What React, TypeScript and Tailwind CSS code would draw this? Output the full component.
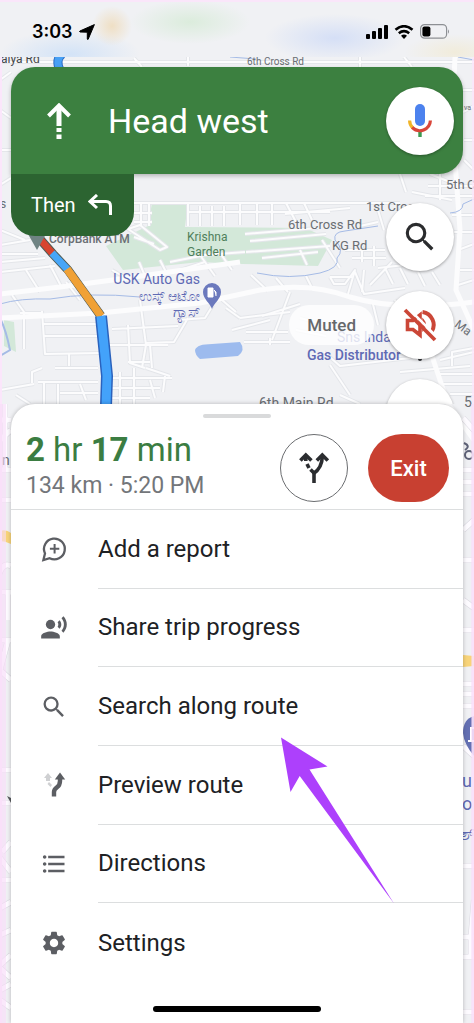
import type { ReactNode } from "react";
import { MdFormatListBulleted, MdRecordVoiceOver, MdSearch, MdSettings } from "react-icons/md";

const ROADS_WIDE = [
  "M0 294 L60 287 L120 279 L240 262",
  "M0 318 L100 313 L200 303 L260 290 Q310 282 350 297 Q400 312 474 302",
  "M455 57 L452 120 L460 230 L456 290 L474 330",
  "M430 350 L448 404 L474 440",
  "M405 57 L400 20",
];

const ROADS = [
  // below the status bar
  "M0 62 H474", "M188 57 V66", "M134 58 L142 67", "M360 57 V67", "M404 57 L412 67",
  "M463 90 H474", "M463 112 L474 106", "M464 140 H474", "M464 160 L474 170",
  "M0 80 L11 72", "M0 110 L11 118", "M0 150 H11", "M0 185 L11 178",
  // around the garden
  "M134 203 H400", "M134 213 H152 M134 222 H152 M141 203 V226 M149 203 V226",
  "M188 203 V226 M200 206 V226 M212 206 V226 M224 206 V226", "M188 212 H330",
  "M240 204 V225 M257 204 V225 M272 204 V225 M286 203 L296 222 M304 203 L312 220",
  "M245 234 L318 228 M250 241 L326 234 M246 252 L330 246 M262 258 L318 252",
  "M300 250 L307 265 M322 240 L340 268 M285 214 L350 208",
  "M128 229 L140 225 L167 247 L160 250 Z M134 237 L154 244",
  "M112 270 L126 278 M170 262 L205 255 L245 252 M180 270 L205 262 M200 255 L215 276",
  "M139 262 L145 276 M160 260 L166 272 M218 250 L232 270 M251 275 L268 291",
  "M276 278 L288 292 M306 276 L313 290",
  // west grid
  "M0 254 H38 M0 262 L45 258 M0 272 L55 266 M0 230 L25 240 M0 245 L30 240",
  "M12 295 L24 312 V349 M20 313 H42 M42 311 L45 354 L100 353 M42 324 H98 M44 336 H100",
  "M69 353 V366 M55 368 H98 M32 383 V372 L42 368 M38 382 H98 M44 383 V404",
  "M0 390 L34 384 M58 384 V404 M80 384 L86 400 M16 395 L30 404 M60 393 H98",
  "M26 270 L40 292 M50 265 L62 288 M66 282 L80 300",
  // middle grid
  "M108 345 H168 M112 329 L178 326 M128 325 L130 363 L145 368 M140 300 L146 345 L142 368",
  "M120 372 V404 M134 368 V404 M112 378 H172 M112 388 H160 M112 398 H150",
  "M146 368 L170 376 M150 345 L152 368 M188 318 L174 342 L145 343 M213 305 L205 318 L178 320",
  "M128 362 H150 M150 380 L155 398 M165 376 L163 392",
  // south of the main road
  "M226 308 L240 318 M222 300 L236 312 M232 330 L270 320 M240 318 L290 312",
  "M290 292 L272 340 M246 332 H288 M244 342 H290 M270 338 V345 M262 316 L300 304",
  "M300 318 L330 326 M296 330 L326 336 M324 352 L340 366 L410 358 M330 365 L350 395 M340 395 L360 404",
  "M400 372 L470 366 M440 374 H474 M440 384 H474 M450 394 H474 M452 366 V352 L474 348",
  // east
  "M330 277 H352 M330 277 L334 284 H345 L355 270 L348 294 M355 272 L364 294 L405 288 M362 292 L364 270",
  "M385 268 L393 284 M400 268 L408 284 M418 272 L425 286 M432 272 L440 285 M370 285 L392 262",
  "M345 250 H385 M352 258 H386 M362 246 V262 M374 246 V266 M378 210 L384 230 M400 174 L406 192",
  "M360 226 L378 222 M430 174 L450 182 M428 186 H474 M425 196 H474 M412 192 L452 200 M440 174 V200",
  "M452 215 H474 M454 232 H474 M458 250 L474 244 M460 270 H474 M458 285 L474 280",
  "M378 268 L432 262 M395 300 L406 330 M372 300 L378 325 M440 360 L474 352",
];

const ROADS_EDGE = [
  "M0 420 H11 M0 440 L11 430 M0 470 H11 M0 500 H11 M5 404 V470",
  "M-4 588 Q0 560 11 566 M0 592 H11 M8 592 V620 M-4 640 H11 M8 640 L0 670 L11 680",
  "M0 770 H11 M0 803 H11 M2 852 L11 842 M0 858 L11 872 M0 880 H11 M0 908 L11 902",
  "M0 935 L11 930 M0 965 L11 955 M0 968 L11 978 M0 990 L11 984 M0 1000 L11 1008",
  "M463 418 L474 430 M463 470 H474 M463 482 H474 M463 494 H474 M463 530 L474 520",
  "M463 560 H474 M463 600 L474 608 M463 630 H474 M463 684 H474 M463 694 H474 M463 706 H474 M463 746 L474 756",
  "M463 866 H474 M463 937 H474 M471 937 V955 M463 957 H474 M463 1012 H474 M474 900 L471 937",
];

function MapBackdrop() {
  return (
    <svg
      aria-hidden="true"
      className="absolute inset-0 h-full w-full"
      viewBox="0 0 474 1023"
      preserveAspectRatio="xMidYMin slice"
      fontFamily="Roboto, 'Noto Sans', sans-serif"
    >
      <rect width="474" height="1023" fill="#f0f1f4" />
      <path d="M152 203H188L185 227L305 228L332 240L318 266L242 264L200 262L123 270L106 246L148 226Z" fill="#d3e8d9" />
      <path d="M4 320L14 322L16 352L4 346Z" fill="#d3e8d9" />
      <path d="M195 350Q197 344 212 344L240 342Q246 350 238 356L200 359Q195 355 195 350Z" fill="#9dbbee" />

      <g fill="none" stroke="#e4e6ea" strokeLinejoin="round">
        {ROADS.map((d) => (
          <path key={d} d={d} strokeWidth="4" />
        ))}
      </g>
      <g fill="none" stroke="#fcfcfd" strokeLinejoin="round">
        {ROADS.map((d) => (
          <path key={d} d={d} strokeWidth="2" />
        ))}
        {ROADS_WIDE.map((d) => (
          <path key={d} d={d} strokeWidth="5" />
        ))}
      </g>
      <g fill="none" stroke="#dad8e0" strokeWidth="6">
        {ROADS_EDGE.map((d) => (
          <path key={d} d={d} />
        ))}
      </g>
      <g fill="none" stroke="#fdfbff" strokeWidth="5">
        {ROADS_EDGE.map((d) => (
          <path key={d} d={d} />
        ))}
      </g>

      <g fill="none" stroke="#a5bbe6" strokeWidth="1">
        <path d="M0 304Q20 298 50 299Q90 292 140 297" />
        <path d="M257 273Q290 280 320 273Q340 268 337 258Q345 250 335 240Q333 232 345 231L378 226" />
        <path d="M450 213Q463 212 463 204L474 199" />
        <path d="M230 57L256 59M458 57L474 60" />
        <path d="M0 318Q6 330 10 350L0 356" strokeWidth="2" />
      </g>
      <path d="M0 531Q6 529 11 533V544Q5 541 0 541Z" fill="#f8d47a" />
      <path d="M463 655L474 656V666L463 667Z" fill="#f8d47a" />

      {/* route with traffic colours */}
      <g fill="none" strokeLinejoin="round">
        <path d="M62 54Q55 60 60 70" stroke="#2b6cc4" strokeWidth="9" />
        <path d="M62 54Q55 60 60 70" stroke="#47a0f5" strokeWidth="7" />
        <path d="M39 238L53 254L68 270L83 291L101 316" stroke="#4f5b55" strokeWidth="9" />
        <path d="M101 316L107 376L106 406" stroke="#2a62bd" strokeWidth="12" />
        <path d="M39 238L53 254" stroke="#d8442f" strokeWidth="7" />
        <path d="M52 253L68 270" stroke="#47a6f8" strokeWidth="7" />
        <path d="M67 269L83 291L101 316" stroke="#f0a136" strokeWidth="8" />
        <path d="M101 316L107 376L106 406" stroke="#43a2fa" strokeWidth="9" />
      </g>
      <path d="M28 234H46L37 250Z" fill="#6f8383" />

      <g fill="#6a6e73" fontSize="13">
        <text x="1" y="63" fontSize="12" fill="#44474b">aiya Rd</text>
        <text x="247" y="65" fontSize="10">6th Cross Rd</text>
        <text x="464" y="110" fontSize="7">va</text>
        <text x="0" y="208" fontSize="12">s</text>
        <text x="446" y="189">5th</text>
        <text x="467" y="189">C</text>
        <text x="366" y="211">1st Cross</text>
        <text x="288" y="229">6th Cross Rd</text>
        <text x="332" y="250">KG Rd</text>
        <text x="49" y="243" fontSize="12" fontWeight="500">CorpBank ATM</text>
        <text x="259" y="408" fontSize="14">6th Main Rd</text>
        <text x="464" y="407" fontSize="14">5</text>
        <text x="454" y="326" fontSize="12" transform="rotate(36 454 326)">Ma</text>
        <text x="2" y="465" fontSize="14">n</text>
      </g>
      <g fill="#4f7f5b" fontSize="12">
        <text x="187" y="241">Krishna</text>
        <text x="187" y="256">Garden</text>
      </g>
      <g fill="#5f6ab4" fontSize="14">
        <text x="200" y="284" textAnchor="end">USK Auto Gas</text>
        <text x="200" y="301" textAnchor="end">ಉಸ್ಕ್ ಆಟೋ</text>
        <text x="200" y="317" textAnchor="end">ಗ್ಯಾಸ್</text>
        <text x="337" y="342">Sns Inda</text>
        <text x="307" y="360" fontWeight="500">Gas Distributor</text>
        <g fontSize="18">
          <text x="462" y="787">u</text>
          <text x="462" y="810">o</text>
          <text x="460" y="840">ಶ್</text>
        </g>
      </g>
      <circle cx="420" cy="359" r="2" fill="#33363a" />
      <path d="M212 309C210 303 203 299 203 292A9 9 0 0 1 221 292C221 299 214 303 212 309Z" fill="#6b79bd" />
      <path d="M208 288H213V297H208ZM214 290L216 292V296" fill="#ffffff" stroke="#ffffff" />
      <path d="M474 716Q463 719 463 733Q464 744 474 756Z" fill="#6470b3" />
      <path d="M470 728H474M471 728V741M468 741H474" stroke="#ffffff" strokeWidth="2" />
      <g fill="none" stroke="#5e6277" strokeWidth="2">
        <path d="M464 443Q471 446 465 450" />
        <circle cx="469" cy="455" r="4" />
      </g>
      <path d="M7 796L11 798V803Z" fill="#55585c" />

      <rect width="2" height="1023" fill="#fbe6fb" />
      <rect x="472" width="2" height="1023" fill="#fbe6fb" opacity="0.8" />
      <rect y="404" width="6" height="619" fill="#f9dcf9" opacity="0.6" />
      <rect x="471" y="404" width="3" height="619" fill="#f9dcf9" opacity="0.5" />
    </svg>
  );
}

function StatusBar() {
  return (
    <header className="relative flex h-[57px] items-center justify-between border-t-2 border-[#fae6fa] bg-[#f0f1f4] bg-[radial-gradient(circle_at_112px_24px,#efdfc4_0,transparent_20px),radial-gradient(ellipse_60px_22px_at_190px_20px,#dbecdc_0,transparent_100%),radial-gradient(ellipse_70px_24px_at_335px_36px,#d5dff6_0,transparent_100%),radial-gradient(ellipse_70px_24px_at_70px_52px,#d3e3f7_0,transparent_100%),radial-gradient(ellipse_50px_18px_at_455px_50px,#f1ecdb_0,transparent_100%)] pt-1 pr-6 pl-8">
      <div className="flex items-center gap-1.5 font-['Inter',sans-serif] text-lg font-semibold text-black">
        <time>3:03</time>
        <svg aria-label="Location in use" viewBox="0 0 16 16" className="size-4">
          <path d="M15.4 .6L9.2 15.2Q8.6 16 8.3 15V8.2L1 8Q.1 7.6 .9 7Z" fill="#000" stroke="#000" />
        </svg>
      </div>
      <div className="flex items-center gap-1.5 text-black">
        <svg aria-label="Signal" viewBox="0 0 22 14" className="h-3.5 w-[22px]">
          <rect x="0" y="9" width="4" height="5" rx="1" />
          <rect x="6" y="6" width="4" height="8" rx="1" />
          <rect x="12" y="3" width="4" height="11" rx="1" />
          <rect x="18" y="0" width="4" height="14" rx="1" />
        </svg>
        <svg aria-label="Wi-Fi" viewBox="0 0 20 14" className="h-3.5 w-5">
          <path d="M1.5 4.8Q10 -2.4 18.5 4.8" fill="none" stroke="#000" strokeWidth="2.6" />
          <path d="M4.8 8.3Q10 4 15.2 8.3" fill="none" stroke="#000" strokeWidth="2.5" />
          <path d="M7 10.8Q10 8.4 13 10.8L10 14Z" />
        </svg>
        <svg aria-label="Battery" viewBox="0 0 30 15" className="h-[15px] w-[30px]">
          <rect x=".6" y=".6" width="26" height="13.6" rx="4" fill="none" stroke="#8d9094" strokeWidth="1.2" />
          <rect x="2.4" y="2.4" width="8" height="10" rx="2" />
          <path d="M28 5.2Q30 7.5 28 9.8Z" fill="#8d9094" />
        </svg>
      </div>
    </header>
  );
}

function MicIcon() {
  return (
    <svg aria-hidden="true" viewBox="0 0 26 36" className="h-9 w-[26px]" fill="none">
      <path d="M13 28V34" stroke="#3a9a50" strokeWidth="3.4" />
      <path d="M2.6 17.5A10.6 10.6 0 0 0 5.8 25" stroke="#f0b429" strokeWidth="3.2" />
      <path d="M5.2 24.4A10.6 10.6 0 0 0 23.4 17.5" stroke="#d9463a" strokeWidth="3.2" />
      <rect x="8" y="1" width="10" height="22" rx="5" fill="#4c82ee" />
    </svg>
  );
}

function MutedIcon() {
  return (
    <svg aria-hidden="true" viewBox="0 0 34 34" className="size-[34px]" fill="none" stroke="#cb4637" strokeWidth="3">
      <path d="M4.500 12.500H10L17 7V27L10 21.500H4.500Z" strokeWidth="3.6" />
      <path d="M20 11.500Q24.500 16.500 20 22Z" fill="#cb4637" strokeWidth="1.500" />
      <path d="M19.500 4A13 13 0 0 1 28.500 24" strokeWidth="4" />
      <path d="M6 1L34 29" stroke="#ffffff" strokeWidth="2.5" />
      <path d="M2 2L32 32" strokeWidth="3.8" />
    </svg>
  );
}

function AlternateRoutesIcon() {
  return (
    <svg aria-hidden="true" viewBox="0 0 30 32" className="h-8 w-[30px]" fill="none" stroke="#2b2d30" strokeWidth="3.6">
      <path d="M15 31V20" />
      <path d="M14.6 21.500Q23 16 23.400 4" />
      <path d="M6.800 3V9M8 12L10 16M11.500 17.500L15 21" />
      <path d="M1.400 8.600L6.800 3L12.400 8.600" />
      <path d="M17.800 8.600L23.300 3L28.800 8.600" />
    </svg>
  );
}

function AddReportIcon() {
  return (
    <svg aria-hidden="true" viewBox="0 0 28 28" className="size-7" fill="none" stroke="currentColor" strokeWidth="2.3">
      <path d="M3.4 25L5 18.4A10.4 10.4 0 1 1 9.6 23.2Z" strokeLinejoin="miter" />
      <path d="M14.6 9V18.4M9.9 13.7H19.3" strokeWidth="2" />
    </svg>
  );
}

function PreviewRouteIcon() {
  return (
    <svg aria-hidden="true" viewBox="0 0 28 28" className="size-7" fill="none">
      <path d="M8 2L12 7H10V10H6V7H4Z" fill="#cfd0d2" />
      <path d="M9 11L12 14L10.5 16L7.5 13Z" fill="#cfd0d2" />
      <path d="M14 25.5V21Q14 18.500 17 16.2Q20 14 20 10V6" stroke="#5c5e63" strokeWidth="4.4" />
      <path d="M20 1.500L25.200 8.500H14.800Z" fill="#5c5e63" />
    </svg>
  );
}

const menuItems: { label: string; icon: ReactNode }[] = [
  { label: "Add a report", icon: <AddReportIcon /> },
  { label: "Share trip progress", icon: <MdRecordVoiceOver size={28} /> },
  { label: "Search along route", icon: <MdSearch size={28} /> },
  { label: "Preview route", icon: <PreviewRouteIcon /> },
  { label: "Directions", icon: <MdFormatListBulleted size={28} /> },
  { label: "Settings", icon: <MdSettings size={28} /> },
];

const roundButton =
  "flex size-[68px] shrink-0 items-center justify-center rounded-full bg-white shadow-[0_1px_3px_rgba(0,0,0,0.35)]";

function Directions() {
  return (
    <section className="relative mx-[11px] mt-2.5 flex h-[107px] items-center rounded-t-3xl rounded-br-3xl bg-[#3c8040] pr-[9px] pl-9 text-white shadow-[0_2px_4px_rgba(0,0,0,0.25)]">
      <svg aria-hidden="true" viewBox="0 0 24 36" className="h-9 w-6" fill="none" stroke="#fff">
        <path d="M12 3V23M12 25V29M12 31.500V36" strokeWidth="5" />
        <path d="M1.500 13L12 2.500L22.500 13" strokeWidth="4" />
      </svg>
      <h1 className="ml-[37px] flex-1 text-[34px] leading-10">Head west</h1>
      <button type="button" aria-label="Voice search" className={roundButton}>
        <MicIcon />
      </button>
    </section>
  );
}

function MapControls() {
  return (
    <div className="relative flex h-[230px] items-start justify-between overflow-hidden pr-5 pl-[11px]">
      <div className="flex h-[62px] w-[123px] items-center gap-3 rounded-b-3xl bg-[#2c6431] pl-5 text-xl text-white">
        Then
        <svg aria-label="turn left" viewBox="0 0 24 22" className="h-[22px] w-6" fill="none" stroke="#fff" strokeWidth="3">
          <path d="M9 1L2 7.500L9 14" />
          <path d="M2 7.500H18Q22.500 7.500 22.500 12V21" />
        </svg>
      </div>
      <div className="flex flex-col items-end gap-5 pt-[29px]">
        <button type="button" aria-label="Search" className={roundButton}>
          <MdSearch size={38} className="text-[#2b2c2e]" />
        </button>
        <div className="flex items-center gap-3">
          <span className="rounded-full bg-white/80 px-[18px] py-2 text-[17px] leading-6 font-medium text-[#66686b]">
            Muted
          </span>
          <button type="button" aria-label="Unmute" className={roundButton}>
            <MutedIcon />
          </button>
        </div>
        <button type="button" aria-label="Report" className={roundButton} />
      </div>
    </div>
  );
}

function TripSheet() {
  return (
    <section className="relative mx-[11px] flex flex-1 flex-col rounded-t-3xl bg-white shadow-[0_0_4px_rgba(0,0,0,0.25)]">
      <div className="mx-auto mt-2.5 h-1 w-[68px] rounded-full bg-[#d9dadb]" />
      <div className="mt-4 flex items-center gap-5 border-b border-[#dcdedf] pr-3.5 pb-[7px] pl-[15px]">
        <div className="flex-1">
          <p className="text-[33px] leading-8 text-[#3b7d42]">
            <b>2</b> hr <b>17</b> min
          </p>
          <p className="pt-1 text-[23px] leading-8 text-[#73767a]">134 km · 5:20 PM</p>
        </div>
        <button
          type="button"
          aria-label="Alternate routes"
          className="flex size-[68px] items-center justify-center rounded-full border border-[#6b6d70]"
        >
          <AlternateRoutesIcon />
        </button>
        <button type="button" className="h-[68px] w-[81px] rounded-full bg-[#c84031] text-[22px] font-medium text-white">
          Exit
        </button>
      </div>
      <ul className="grid h-[472px] grid-rows-6">
        {menuItems.map((item) => (
          <li key={item.label} className="group">
            <button type="button" className="flex h-full w-full items-center pl-[29px] text-left">
              <span className="flex w-7 justify-center text-[#5c5e63]">{item.icon}</span>
              <span className="ml-[30px] flex h-full flex-1 items-center border-b border-[#dcdedf] text-2xl text-[#202124] group-last:border-b-0">
                {item.label}
              </span>
            </button>
          </li>
        ))}
      </ul>
      <div className="mx-auto mt-auto mb-[11px] h-1.5 w-[168px] rounded-full bg-black" />
    </section>
  );
}

export default function App() {
  return (
    <main className="relative flex min-h-screen flex-col overflow-hidden font-['Roboto','Noto_Sans',sans-serif]">
      <MapBackdrop />
      <StatusBar />
      <Directions />
      <MapControls />
      <TripSheet />
      {/* pointer over the "Search along route" row */}
      <svg
        aria-hidden="true"
        viewBox="0 0 114 167"
        className="pointer-events-none absolute top-[737px] left-[281px] h-[167px] w-[114px]"
      >
        <path d="M0 .5L46.500 29.500L28.500 32.500L113 166.500L18.700 39L9.500 55Z" fill="#ad40fc" />
      </svg>
    </main>
  );
}
